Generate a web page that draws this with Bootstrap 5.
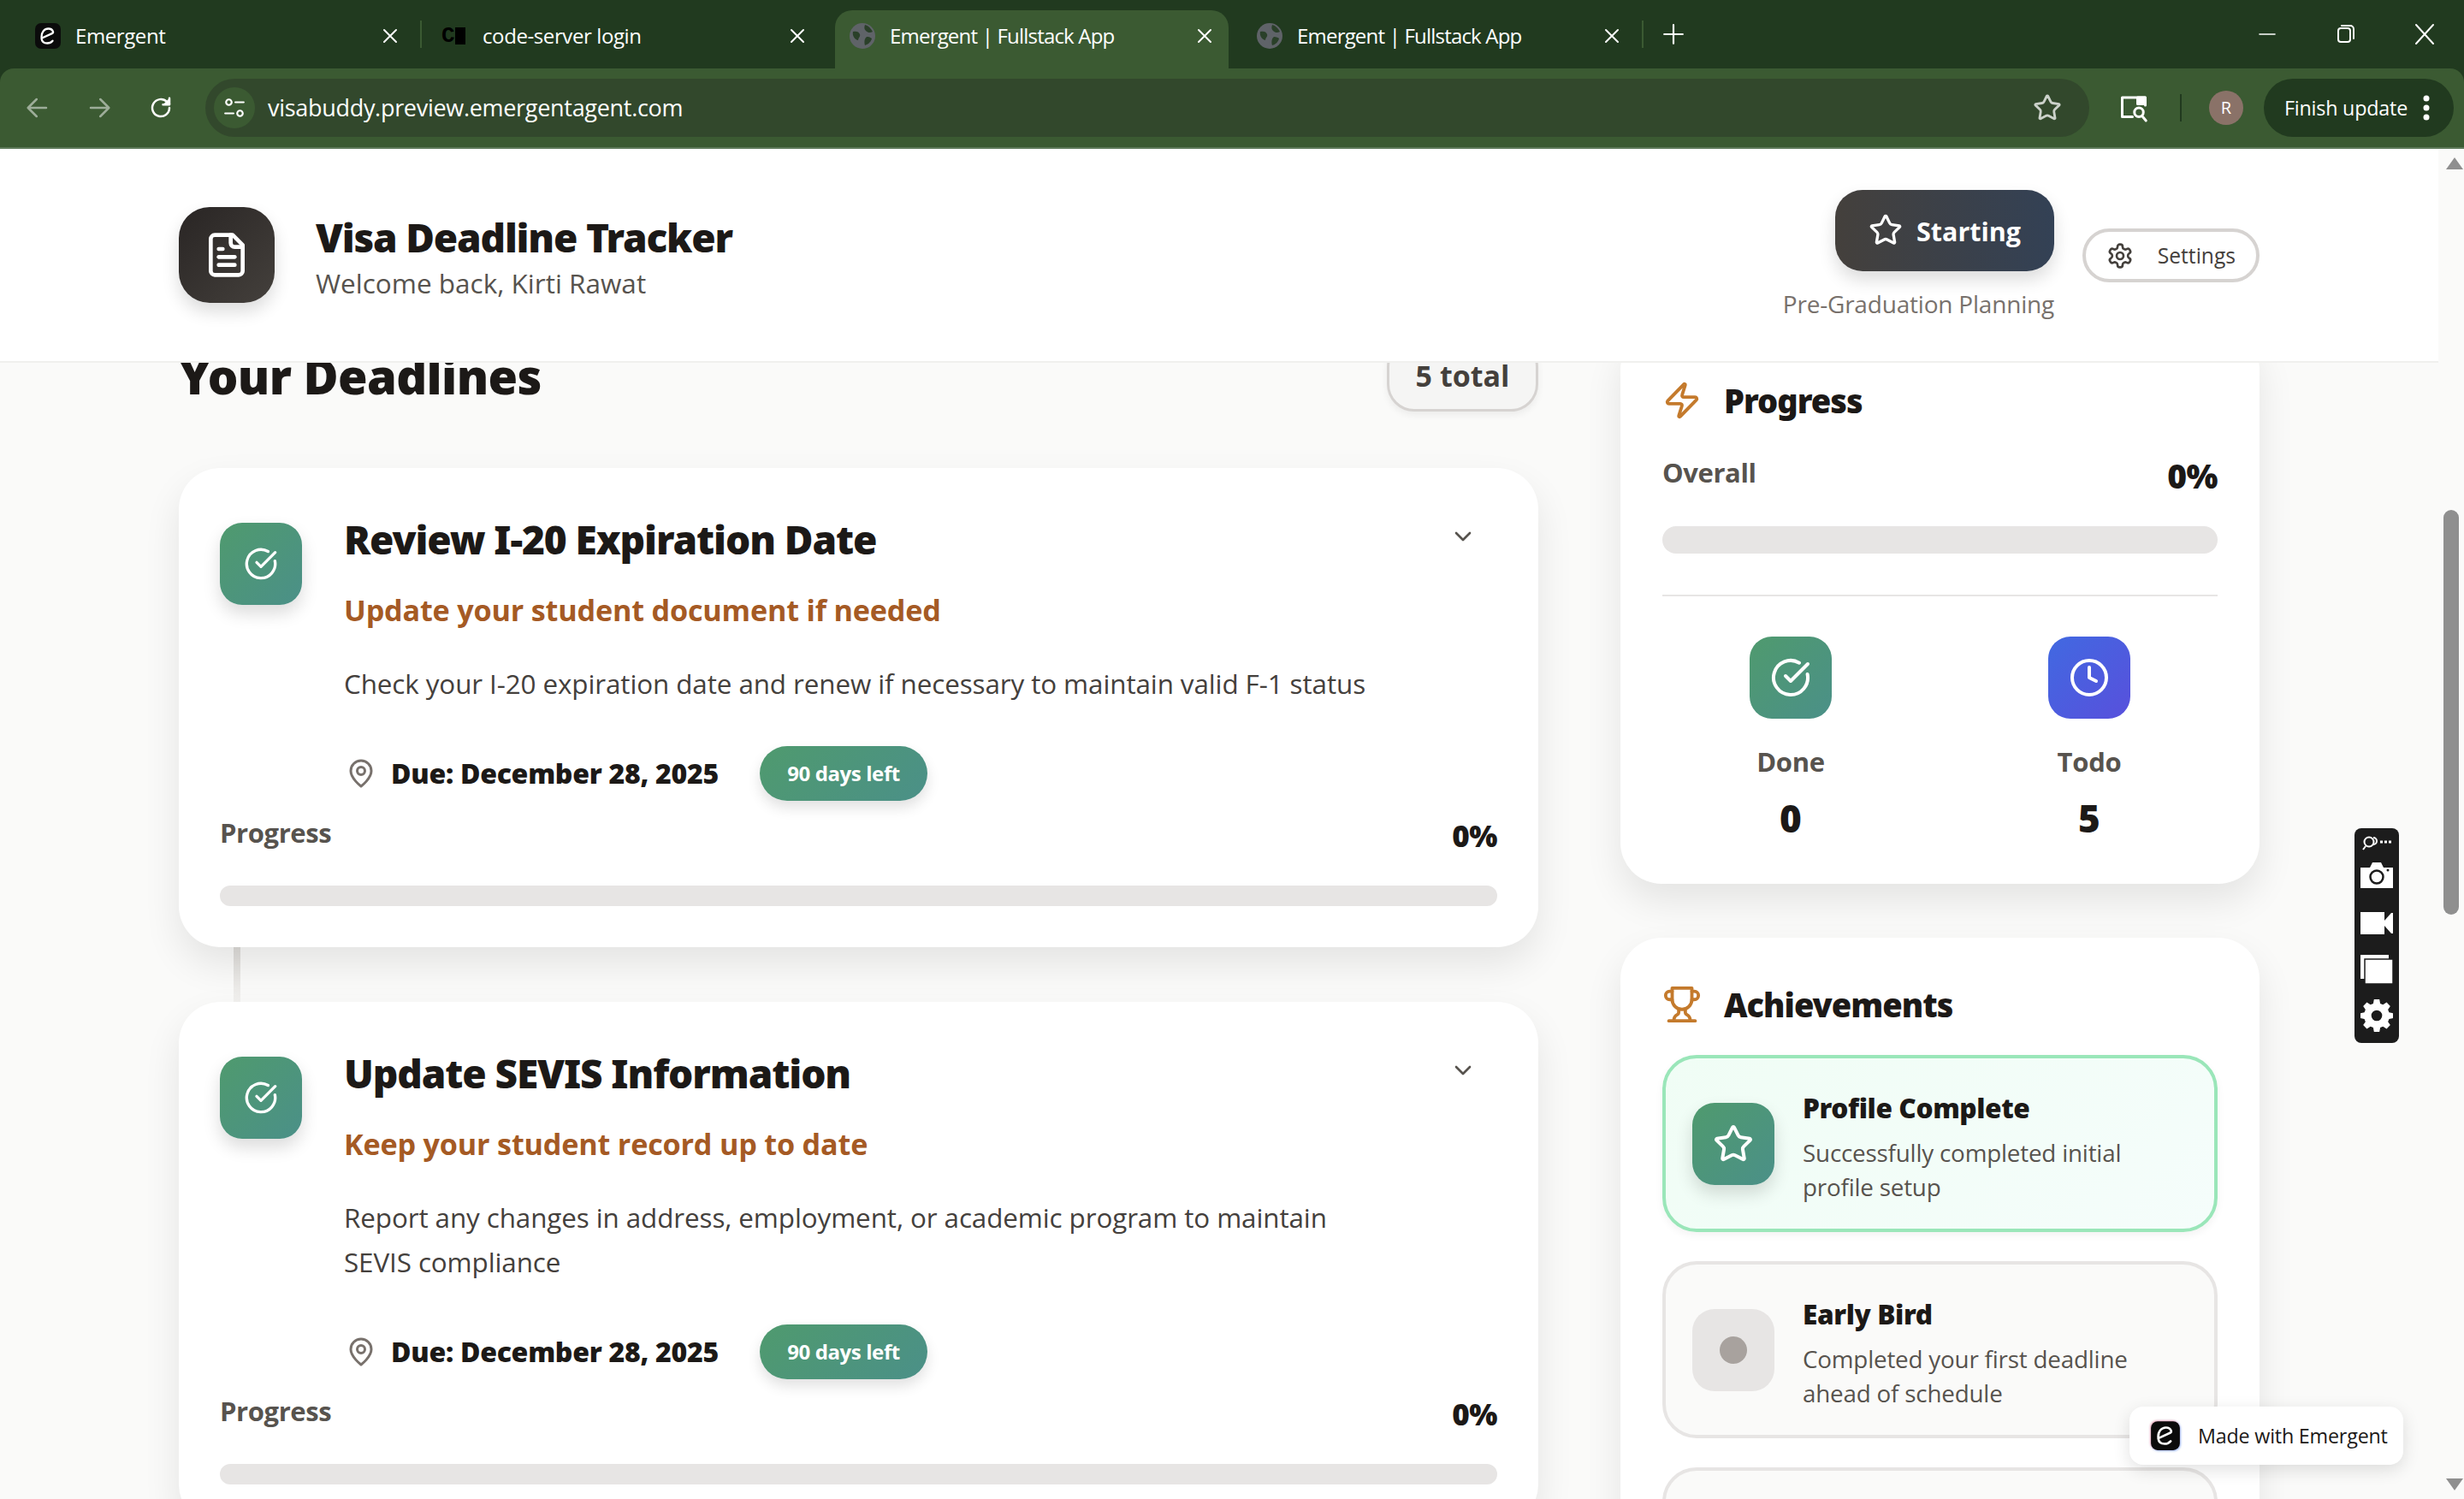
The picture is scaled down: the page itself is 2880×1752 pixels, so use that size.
<!DOCTYPE html>
<html lang="en">
<head>
<meta charset="utf-8">
<title>Visa Deadline Tracker</title>
<link href="https://cdn.jsdelivr.net/npm/bootstrap@5.3.0/dist/css/bootstrap.min.css" rel="stylesheet">
<style>
html,body{height:100%;margin:0;overflow:hidden}
body{font-family:"Open Sans","Noto Sans",sans-serif;background:#fafaf9;color:#1c1917}
.ico{fill:none;stroke:currentColor;stroke-width:2;stroke-linecap:round;stroke-linejoin:round;flex:none}
.heavy{font-family:"Noto Sans","Open Sans",sans-serif;font-weight:900}
.browser-tabs{height:80px;background:#213a1f;color:#fff;font-size:24px}
.tab-x{width:460px;height:68px;margin:12px 8px 0;padding:0 16px;position:relative;border-radius:20px 20px 0 0;letter-spacing:-.4px}
.tab-x.on{background:#3b5a32}
.tab-x.sep::after{content:"";position:absolute;right:-9px;top:12px;width:2px;height:32px;background:#3b5a32}
.tab-long{letter-spacing:-.8px}
.tab-fav{width:32px;height:32px;flex:none;margin-right:16px}
.tab-c{font:700 26px/32px "Liberation Mono",monospace;color:#000;display:flex;align-items:center;width:34px;margin-right:14px}
.tab-c i{display:inline-block;width:12px;height:20px;background:#000;margin-left:1px}
.plus-x{margin-left:18px;width:36px;height:80px}
.win-btn{width:92px}
.browser-bar{height:94px;background:#213a1f}
.bar-in{height:94px;background:#3b5a32;border-radius:16px 16px 0 0;border-bottom:2px solid #5e7a5a;color:#fff;padding-left:8px;padding-right:12px}
.bar-cell{width:72px}
.omni{width:2202px;height:68px;border-radius:34px;background:#32482c;margin-left:16px;padding:0 32px 0 10px;font-size:27px;letter-spacing:-.3px}
.omni-chip{width:48px;height:48px;border-radius:50%;background:#3b5a32;margin-right:15px}
.tool-gap{margin-left:18px}
.tool-sep{width:2px;height:32px;background:#213a1f;margin:0 32px 0 36px}
.avatar-r{width:40px;height:40px;border-radius:50%;background:#8a7268;font-size:20px;margin-right:24px}
.finish-pill{width:222px;height:68px;border-radius:34px;background:#213a1f;font-size:23.300px;padding-left:24px;letter-spacing:-.2px}
.finish-dots{margin-right:28px}
.app-area{height:1578px;position:relative}
.app-main{width:2850px;height:1578px;flex:none}
.app-head{height:250px;background:#fff;border-bottom:2px solid #f0f0ee;position:relative;z-index:2}
.head-in{width:2432px;height:248px;margin:0 auto}
.head-ico{width:112px;height:112px;border-radius:36px;background:linear-gradient(135deg,#292524,#44403c);color:#fff;box-shadow:0 10px 20px rgba(0,0,0,.14)}
.head-text{padding-top:3px}
.head-title{font-size:46px;line-height:60px;margin:0;letter-spacing:-1.200px;color:#1c1917}
.head-sub{font-size:31.500px;line-height:44px;color:#57534e;margin-top:2px}
.level-pill{width:256px;height:95px;border-radius:32px;background:linear-gradient(90deg,#44403c,#334155);color:#fff;font-size:30.500px;font-weight:700;box-shadow:0 10px 20px rgba(0,0,0,.14)}
.level-pill span{position:relative;top:2px}
.level-note{font-size:28px;line-height:40px;color:#78716c;margin-top:18px;letter-spacing:-.2px}
.set-btn{width:207px;height:63px;border-radius:32px;border:4px solid #d6d3d1;background:#fff;color:#44403c;font-size:24.600px;padding:2px 24px 0 24px}
.scroll-win{height:1328px;overflow:hidden}
.scroll-in{width:2432px;margin:-40px auto 0;gap:96px}
.col-left{width:1589px;flex:none}
.col-right{width:747px;flex:none}
.sec-row{height:97px;margin-bottom:66px}
.sec-title{font-size:56px;line-height:72px;margin:0 0 6px;letter-spacing:-.600px}
.total-pill{width:177px;height:84px;border:3px solid #d6d3d1;background:#f5f5f4;color:#44403c;font-size:34px;font-weight:700;border-radius:32px;box-shadow:0 4px 8px rgba(0,0,0,.06)}
.dl-card{border:0;border-radius:48px;background:#fff;padding:48px;box-shadow:0 20px 44px rgba(0,0,0,.09)}
.grad-green{background:linear-gradient(135deg,#4f9a6e,#4b9088);color:#fff}
.grad-blue{background:linear-gradient(135deg,#4169e1,#5850dc);color:#fff}
.tile{width:96px;height:96px;border-radius:26px;flex:none}
.tile-shadow{box-shadow:0 10px 20px rgba(0,0,0,.14)}
.dl-title{font-size:46px;line-height:70px;margin:0 0 23px;letter-spacing:-1.100px}
.dl-sub{font-size:34.200px;font-weight:700;line-height:50px;color:#a55a24;margin:0 0 35px;letter-spacing:-.2px}
.dl-desc{font-size:31.400px;line-height:52px;color:#44403c;margin:0;letter-spacing:-.1px}
.due-row{height:64px;margin-top:47px;padding-left:2px}
.due-text{font-size:32px;margin:0 48px 0 17px;color:#1c1917;letter-spacing:-.27px}
.days-pill{width:196px;height:64px;border-radius:32px;font-size:24px;font-weight:700;box-shadow:0 8px 16px rgba(0,0,0,.12);letter-spacing:-.4px}
.chev{color:#57534e;margin:16px 0 0 auto;position:relative;right:24px}
.prog-label{font-size:31px;font-weight:700;line-height:44px;color:#57534e;letter-spacing:-.4px}
.prog-val{font-size:35px;line-height:44px;color:#1c1917;margin-top:4px;letter-spacing:-.5px}
.prog-big{font-size:39px}
.prog-row{margin-top:15px}
.track-x{height:24px;border-radius:12px;background:#e7e5e4;margin-top:36px}
.link-line{width:8px;height:64px;background:linear-gradient(#dddbd8,#f2f1ef);margin-left:64px}
.side-a{margin-top:0;padding:48px 49px 47px}
.side-b{margin-top:63px;padding:42px 49px 48px}
.side-h{font-size:38px;line-height:72px;margin:0;letter-spacing:-1px;gap:26px}
.track-b{height:32px;border-radius:16px;margin-top:37px}
.ov-row{margin-top:26px}
.rule-x{height:2px;background:#e7e5e4;margin:48px 0 47px}
.stat-col{width:300px}
.stat-label{font-size:31px;font-weight:700;line-height:44px;color:#57534e;margin-top:28px;letter-spacing:-.3px}
.stat-num{font-size:44px;line-height:60px;margin-top:14px;color:#1c1917}
.ach-item{height:207px;border-radius:40px;border:4px solid #e7e5e4;background:#fafaf9;padding:0 31px;margin-top:34px;gap:33px}
.ach-item.first{margin-top:23px;border-color:#9ae6b9;background:linear-gradient(135deg,#f0fdf5,#f5fdfb);box-shadow:0 4px 10px rgba(0,0,0,.05)}
.ach-dot{background:#e7e5e4}
.ach-dot i{display:block;width:32px;height:32px;border-radius:50%;background:#a8a29e}
.ach-body{padding-top:6px}
.ach-t{font-size:31.600px;line-height:44px;margin:0 0 10px;letter-spacing:-.4px}
.ach-d{font-size:27.800px;line-height:40px;color:#57534e;letter-spacing:-.2px}
.sbar{width:30px;flex:none;background:#fafaf9;position:relative;z-index:3;padding:0 6px}
.sbar-thumb{height:473px;border-radius:9px;background:#8f8f8f;margin-top:422px;width:18px}
.sbar-up,.sbar-down{width:0;height:0;position:absolute;left:9px;border-left:10px solid transparent;border-right:10px solid transparent}
.sbar-up{top:10px;border-bottom:14px solid #8f8f8f}
.sbar-down{bottom:10px;border-top:14px solid #8f8f8f}
.cap-bar{position:absolute;left:2752px;top:794px;width:52px;height:251px;background:#1c1c1c;border-radius:8px;z-index:4;padding-top:4px;color:#fff}
.cap-bar svg{display:block;flex:none}
.cap-a{margin-top:10px}
.cap-b{margin-top:28px}
.cap-c{margin-top:24px}
.cap-d{margin-top:18px}
.made-by{position:absolute;left:2489px;top:1470px;width:320px;height:68px;border-radius:16px;background:#fff;z-index:4;box-shadow:0 6px 20px rgba(0,0,0,.12);font-size:23.300px;padding-left:24px;gap:20px;letter-spacing:-.2px;color:#1c1917}
.logo-halo{filter:drop-shadow(-1px -1px 1px rgba(240,120,140,.6)) drop-shadow(1px 1px 1px rgba(90,140,240,.6))}
.pin-c{color:#78716c}
.zap-c{color:#c47a2c}
.dl-gap{gap:49px}
.head-right{gap:33px}
.desc-wrap{max-width:1190px}
</style>
</head>
<body>
<svg width="0" height="0" class="position-absolute">
<defs>
<symbol id="i-file" viewBox="0 0 24 24"><path d="M15 2H6a2 2 0 0 0-2 2v16a2 2 0 0 0 2 2h12a2 2 0 0 0 2-2V7Z"/><path d="M14 2v4a2 2 0 0 0 2 2h4"/><path d="M10 9H8"/><path d="M16 13H8"/><path d="M16 17H8"/></symbol>
<symbol id="i-star" viewBox="0 0 24 24"><path d="M11.525 2.295a.53.53 0 0 1 .95 0l2.31 4.679a2.123 2.123 0 0 0 1.595 1.16l5.166.756a.53.53 0 0 1 .294.904l-3.736 3.638a2.123 2.123 0 0 0-.611 1.878l.882 5.14a.53.53 0 0 1-.771.56l-4.618-2.428a2.122 2.122 0 0 0-1.973 0L6.396 21.01a.53.53 0 0 1-.77-.56l.881-5.139a2.122 2.122 0 0 0-.611-1.879L2.16 9.795a.53.53 0 0 1 .294-.906l5.165-.755a2.122 2.122 0 0 0 1.597-1.16z"/></symbol>
<symbol id="i-gear" viewBox="0 0 24 24"><path d="M12.22 2h-.44a2 2 0 0 0-2 2v.18a2 2 0 0 1-1 1.73l-.43.25a2 2 0 0 1-2 0l-.15-.08a2 2 0 0 0-2.73.73l-.22.38a2 2 0 0 0 .73 2.73l.15.1a2 2 0 0 1 1 1.72v.51a2 2 0 0 1-1 1.74l-.15.09a2 2 0 0 0-.73 2.73l.22.38a2 2 0 0 0 2.73.73l.15-.08a2 2 0 0 1 2 0l.43.25a2 2 0 0 1 1 1.73V20a2 2 0 0 0 2 2h.44a2 2 0 0 0 2-2v-.18a2 2 0 0 1 1-1.73l.43-.25a2 2 0 0 1 2 0l.15.08a2 2 0 0 0 2.73-.73l.22-.39a2 2 0 0 0-.73-2.73l-.15-.08a2 2 0 0 1-1-1.74v-.5a2 2 0 0 1 1-1.74l.15-.09a2 2 0 0 0 .73-2.73l-.22-.38a2 2 0 0 0-2.73-.73l-.15.08a2 2 0 0 1-2 0l-.43-.25a2 2 0 0 1-1-1.73V4a2 2 0 0 0-2-2z"/><circle cx="12" cy="12" r="3"/></symbol>
<symbol id="i-check" viewBox="0 0 24 24"><path d="M21.801 10A10 10 0 1 1 17 3.335"/><path d="m9 11 3 3L22 4"/></symbol>
<symbol id="i-clock" viewBox="0 0 24 24"><circle cx="12" cy="12" r="10"/><path d="M12 6v6l4 2"/></symbol>
<symbol id="i-zap" viewBox="0 0 24 24"><path d="M4 14a1 1 0 0 1-.78-1.63l9.9-10.2a.5.5 0 0 1 .86.46l-1.92 6.02A1 1 0 0 0 13 10h7a1 1 0 0 1 .78 1.63l-9.9 10.2a.5.5 0 0 1-.86-.46l1.92-6.02A1 1 0 0 0 11 14z"/></symbol>
<symbol id="i-trophy" viewBox="0 0 24 24"><path d="M6 9H4.5a2.5 2.5 0 0 1 0-5H6"/><path d="M18 9h1.5a2.5 2.5 0 0 0 0-5H18"/><path d="M4 22h16"/><path d="M10 14.66V17c0 .55-.47.98-.97 1.21C7.85 18.75 7 20.24 7 22"/><path d="M14 14.66V17c0 .55.47.98.97 1.21C16.15 18.75 17 20.24 17 22"/><path d="M18 2H6v7a6 6 0 0 0 12 0V2Z"/></symbol>
<symbol id="i-pin" viewBox="0 0 24 24"><path d="M20 10c0 6-8 12-8 12s-8-6-8-12a8 8 0 0 1 16 0Z"/><circle cx="12" cy="10" r="3"/></symbol>
<symbol id="i-chev" viewBox="0 0 24 24"><path d="m6 9 6 6 6-6"/></symbol>
<symbol id="i-x" viewBox="0 0 24 24"><path d="M5 5l14 14M19 5 5 19"/></symbol>
<symbol id="i-logo" viewBox="0 0 32 32"><rect x="1" y="1" width="30" height="30" rx="7" fill="#0b0b0b" stroke="none"/><path d="M8.500 17.500C8.300 11.500 12 7.500 16.500 7.500c2.800 0 4.800 1.300 5.500 3.500.3 1-.3 1.700-1.200 2.100L8.500 18.800c.4 3.500 3 5.700 6.700 5.700 2.700 0 4.800-1 6.300-2.800" fill="none" stroke="#fff" stroke-width="2.300" stroke-linecap="round" stroke-linejoin="round"/></symbol>
<symbol id="i-globe" viewBox="0 0 32 32"><circle cx="16" cy="16" r="15" fill="#5f6368" stroke="none"/><path d="M5 11c4-1 7 0 8 3s-2 4-2 7c-4-1-7-5-6-10Zm14-8c4 1 7 4 9 8-3 2-6 1-8-1s-2-4-1-7Zm2 14c3 0 5 1 6 2-1 4-4 7-8 8-1-3-1-8 2-10Z" fill="#213a1f" stroke="none" opacity=".85"/></symbol>
</defs>
</svg>

<div class="browser-tabs d-flex align-items-start">
  <div class="ps-3 d-flex">
    <div class="tab-x sep d-flex align-items-center pb-2"><svg class="tab-fav"><use href="#i-logo"/></svg><span>Emergent</span><svg class="ico ms-auto" width="24" height="24" stroke-width="2.4"><use href="#i-x"/></svg></div>
    <div class="tab-x d-flex align-items-center pb-2"><span class="tab-c">C<i></i></span><span>code-server login</span><svg class="ico ms-auto" width="24" height="24"><use href="#i-x"/></svg></div>
    <div class="tab-x on d-flex align-items-center pb-2"><svg class="tab-fav"><use href="#i-globe"/></svg><span class="tab-long">Emergent | Fullstack App</span><svg class="ico ms-auto" width="24" height="24"><use href="#i-x"/></svg></div>
    <div class="tab-x sep d-flex align-items-center pb-2"><svg class="tab-fav"><use href="#i-globe"/></svg><span class="tab-long">Emergent | Fullstack App</span><svg class="ico ms-auto" width="24" height="24"><use href="#i-x"/></svg></div>
  </div>
  <div class="plus-x d-flex align-items-center justify-content-center"><svg class="ico" width="26" height="26" viewBox="0 0 24 24"><path d="M12 2v20M2 12h20"/></svg></div>
  <div class="ms-auto d-flex">
    <div class="win-btn d-flex justify-content-center pt-4"><svg class="ico" width="24" height="32" viewBox="0 0 24 32"><path d="M3 16h18" stroke-width="1.6"/></svg></div>
    <div class="win-btn d-flex justify-content-center pt-4"><svg class="ico" width="24" height="32" viewBox="0 0 24 32" stroke-width="1.6"><rect x="3" y="9" width="14" height="16" rx="3"/><path d="M7 6h10a4 4 0 0 1 4 4v11"/></svg></div>
    <div class="win-btn d-flex justify-content-center pt-4"><svg class="ico" width="24" height="32" viewBox="0 0 24 32" stroke-width="1.6"><path d="M2 5l20 22M22 5 2 27"/></svg></div>
  </div>
</div>

<div class="browser-bar">
  <div class="bar-in d-flex align-items-center">
    <div class="bar-cell d-flex justify-content-center"><svg class="ico opacity-50" width="30" height="30" viewBox="0 0 24 24"><path d="M20 12H4m7-8-8 8 8 8"/></svg></div>
    <div class="bar-cell d-flex justify-content-center"><svg class="ico opacity-50" width="30" height="30" viewBox="0 0 24 24"><path d="M4 12h16m-7-8 8 8-8 8"/></svg></div>
    <div class="bar-cell d-flex justify-content-center"><svg class="ico" width="30" height="30" viewBox="0 0 24 24" stroke-width="2.4"><path d="M20 12a8 8 0 1 1-2.4-5.7L20 8.5"/><path d="M20 3v6h-6" fill="#fff"/></svg></div>
    <div class="omni d-flex align-items-center">
      <div class="omni-chip d-flex align-items-center justify-content-center"><svg class="ico" width="26" height="26" viewBox="0 0 24 24" stroke-width="2.2"><circle cx="6" cy="6" r="3"/><path d="M13 6h9M2 18h9"/><circle cx="18" cy="18" r="3"/></svg></div>
      <span>visabuddy.preview.emergentagent.com</span>
      <svg class="ico ms-auto opacity-75" width="34" height="34"><use href="#i-star"/></svg>
    </div>
    <div class="d-flex align-items-center justify-content-center tool-gap ps-3"><svg class="ico" width="36" height="36" viewBox="0 0 24 24" stroke-width="2.2"><path d="M11 19H3V4h18v6" /><path d="M15 4h6v5h-6z" fill="#fff"/><circle cx="16" cy="15.500" r="3.500"/><path d="m19 19 2.500 3"/></svg></div>
    <div class="tool-sep"></div>
    <div class="avatar-r d-flex align-items-center justify-content-center">R</div>
    <div class="finish-pill d-flex align-items-center"><span>Finish update</span><svg class="ms-auto finish-dots" width="8" height="32" viewBox="0 0 8 32" fill="#fff"><circle cx="4" cy="5" r="3.500"/><circle cx="4" cy="16" r="3.500"/><circle cx="4" cy="27" r="3.500"/></svg></div>
  </div>
</div>

<div class="app-area d-flex">
  <div class="app-main d-flex flex-column">
    <header class="app-head">
      <div class="head-in d-flex align-items-center">
        <div class="head-ico d-flex align-items-center justify-content-center me-5"><svg class="ico" width="56" height="56"><use href="#i-file"/></svg></div>
        <div class="head-text">
          <h1 class="head-title heavy">Visa Deadline Tracker</h1>
          <div class="head-sub">Welcome back, Kirti Rawat</div>
        </div>
        <div class="ms-auto d-flex align-items-center head-right">
          <div class="d-flex flex-column align-items-end">
            <div class="level-pill d-flex align-items-center justify-content-center gap-3"><svg class="ico" width="40" height="40"><use href="#i-star"/></svg><span>Starting</span></div>
            <div class="level-note">Pre-Graduation Planning</div>
          </div>
          <button type="button" class="btn set-btn d-flex align-items-center justify-content-between"><svg class="ico" width="32" height="32"><use href="#i-gear"/></svg><span>Settings</span></button>
        </div>
      </div>
    </header>
    <div class="scroll-win">
      <div class="scroll-in d-flex align-items-start">
        <main class="col-left">
          <div class="sec-row d-flex justify-content-between align-items-end">
            <h2 class="sec-title heavy">Your Deadlines</h2>
            <div class="total-pill d-flex align-items-center justify-content-center">5 total</div>
          </div>

          <article class="card dl-card">
            <div class="d-flex dl-gap">
              <div class="tile tile-shadow grad-green d-flex align-items-center justify-content-center mt-3"><svg class="ico" width="40" height="40"><use href="#i-check"/></svg></div>
              <div class="flex-grow-1">
                <div class="d-flex"><h3 class="dl-title heavy">Review I-20 Expiration Date</h3><svg class="ico chev" width="32" height="32"><use href="#i-chev"/></svg></div>
                <p class="dl-sub">Update your student document if needed</p>
                <p class="dl-desc">Check your I-20 expiration date and renew if necessary to maintain valid F-1 status</p>
                <div class="due-row d-flex align-items-center"><svg class="ico pin-c" width="36" height="36"><use href="#i-pin"/></svg><span class="due-text heavy">Due: December 28, 2025</span><span class="days-pill grad-green d-flex align-items-center justify-content-center">90 days left</span></div>
              </div>
            </div>
            <div class="d-flex justify-content-between prog-row"><span class="prog-label">Progress</span><span class="prog-val heavy">0%</span></div>
            <div class="progress track-x"></div>
          </article>
          <div class="link-line"></div>
          <article class="card dl-card">
            <div class="d-flex dl-gap">
              <div class="tile tile-shadow grad-green d-flex align-items-center justify-content-center mt-3"><svg class="ico" width="40" height="40"><use href="#i-check"/></svg></div>
              <div class="flex-grow-1">
                <div class="d-flex"><h3 class="dl-title heavy">Update SEVIS Information</h3><svg class="ico chev" width="32" height="32"><use href="#i-chev"/></svg></div>
                <p class="dl-sub">Keep your student record up to date</p>
                <p class="dl-desc desc-wrap">Report any changes in address, employment, or academic program to maintain SEVIS compliance</p>
                <div class="due-row d-flex align-items-center"><svg class="ico pin-c" width="36" height="36"><use href="#i-pin"/></svg><span class="due-text heavy">Due: December 28, 2025</span><span class="days-pill grad-green d-flex align-items-center justify-content-center">90 days left</span></div>
              </div>
            </div>
            <div class="d-flex justify-content-between prog-row"><span class="prog-label">Progress</span><span class="prog-val heavy">0%</span></div>
            <div class="progress track-x"></div>
          </article>
        </main>

        <aside class="col-right">
          <section class="card dl-card side-a">
            <h3 class="side-h heavy d-flex align-items-center"><svg class="ico zap-c" width="46" height="46"><use href="#i-zap"/></svg><span>Progress</span></h3>
            <div class="ov-row d-flex justify-content-between"><span class="prog-label">Overall</span><span class="prog-val prog-big heavy">0%</span></div>
            <div class="progress track-x track-b"></div>
            <div class="rule-x"></div>
            <div class="d-flex justify-content-between">
              <div class="stat-col d-flex flex-column align-items-center">
                <div class="tile grad-green d-flex align-items-center justify-content-center"><svg class="ico" width="48" height="48"><use href="#i-check"/></svg></div>
                <div class="stat-label">Done</div><div class="stat-num heavy">0</div>
              </div>
              <div class="stat-col d-flex flex-column align-items-center">
                <div class="tile grad-blue d-flex align-items-center justify-content-center"><svg class="ico" width="48" height="48"><use href="#i-clock"/></svg></div>
                <div class="stat-label">Todo</div><div class="stat-num heavy">5</div>
              </div>
            </div>
          </section>
          <section class="card dl-card side-b">
            <h3 class="side-h heavy d-flex align-items-center"><svg class="ico zap-c" width="46" height="46"><use href="#i-trophy"/></svg><span>Achievements</span></h3>
            <div class="ach-item first d-flex align-items-center">
              <div class="tile tile-shadow grad-green d-flex align-items-center justify-content-center"><svg class="ico" width="48" height="48"><use href="#i-star"/></svg></div>
              <div class="ach-body"><h4 class="ach-t heavy">Profile Complete</h4><div class="ach-d">Successfully completed initial<br>profile setup</div></div>
            </div>
            <div class="ach-item d-flex align-items-center">
              <div class="tile ach-dot d-flex align-items-center justify-content-center"><i></i></div>
              <div class="ach-body"><h4 class="ach-t heavy">Early Bird</h4><div class="ach-d">Completed your first deadline<br>ahead of schedule</div></div>
            </div>
            <div class="ach-item"></div>
          </section>
        </aside>
      </div>
    </div>
  </div>
  <div class="sbar"><div class="sbar-up"></div><div class="sbar-thumb"></div><div class="sbar-down"></div></div>

  <div class="cap-bar d-flex flex-column align-items-center">
    <svg width="36" height="26" viewBox="0 0 36 26" fill="none" stroke="#fff" stroke-width="2"><circle cx="9" cy="12" r="5.500"/><path d="M14 7a4 4 0 0 1 0 8M5 17l-3 4"/><path d="M22 12h3M27 12h3M32 12h3" stroke-width="3"/></svg>
    <svg class="cap-a" width="38" height="30" viewBox="0 0 38 30"><path d="M0 6h11l3-6h10l3 6h11v24H0z" fill="#fff"/><circle cx="19" cy="17" r="7.500" fill="#fff" stroke="#1c1c1c" stroke-width="2.500"/><circle cx="32" cy="9" r="1.500" fill="#1c1c1c"/></svg>
    <svg class="cap-b" width="38" height="26" viewBox="0 0 38 26"><path d="M0 0h28v10l8-9h2v24h-2l-8-9v10H0z" fill="#fff"/></svg>
    <svg class="cap-c" width="38" height="34" viewBox="0 0 38 34"><path d="M0 0h33v28H0z" fill="#fff"/><path d="M5 5h33v29H5z" fill="#fff" stroke="#1c1c1c" stroke-width="1.500"/></svg>
    <svg class="cap-d" width="38" height="38" viewBox="0 0 24 24"><path fill="#fff" fill-rule="evenodd" d="M10 0h4l.6 3.100 2 .8L19.300 2.200 22 5l-1.700 2.600.8 2L24 10.200v3.700l-2.900.6-.8 2L22 19l-2.700 2.800-2.700-1.700-2 .8L14 24h-4l-.6-3.100-2-.8L4.700 21.800 2 19l1.700-2.500-.8-2L0 13.900v-3.700l2.900-.6.8-2L2 5l2.700-2.800 2.700 1.700 2-.8zM12 8a4 4 0 1 0 0 8 4 4 0 0 0 0-8z"/></svg>
  </div>
  <div class="made-by d-flex align-items-center"><svg class="logo-halo" width="36" height="36"><use href="#i-logo"/></svg><span>Made with Emergent</span></div>
</div>
</body>
</html>
